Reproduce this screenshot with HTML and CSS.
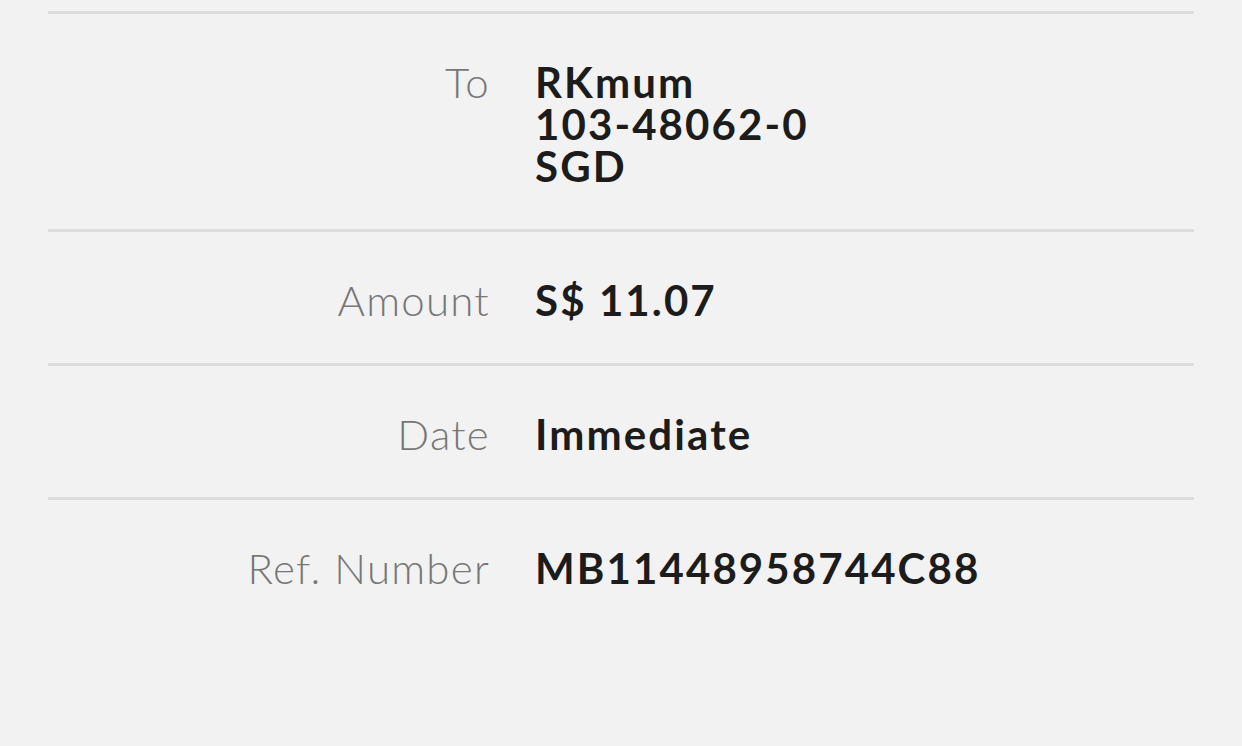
FILE: index.html
```html
<!DOCTYPE html>
<html>
<head>
    <meta charset="utf-8">
    <link rel="stylesheet" href="styles.css">
</head>
<body>
    <div class="summary">
        <div class="summary-row">
            <div class="summary-label">To</div>
            <div class="summary-value">
                RKmum<br>
                103-48062-0<br>
                SGD
            </div>
        </div>
        <div class="summary-row">
            <div class="summary-label">Amount</div>
            <div class="summary-value">S$ 11.07</div>
        </div>
        <div class="summary-row">
            <div class="summary-label">Date</div>
            <div class="summary-value">Immediate</div>
        </div>
        <div class="summary-row">
            <div class="summary-label">Ref. Number</div>
            <div class="summary-value">MB11448958744C88</div>
        </div>
    </div>
</body>
</html>
```

FILE: styles.css
```css
body {
  margin: 0;
  background-color: #f2f2f2;
  font-family: "Lato", "Noto Sans", sans-serif;
}
.summary {
  margin: 0 48px;
  padding-top: 11px;
}
.summary-row {
  display: grid;
  grid-template-columns: 441px 1fr;
  column-gap: 46px;
  padding: 47px 0 42px;
  border-top: 3px solid #dcdcdc;
  font-size: 42px;
  line-height: 42px;
}
.summary-label {
  text-align: right;
  font-weight: 300;
  letter-spacing: 0.03em;
  margin-right: -1px;
  color: #777;
}
.summary-value {
  font-weight: 700;
  letter-spacing: 0.05em;
  color: #1c1c1c;
}
```
